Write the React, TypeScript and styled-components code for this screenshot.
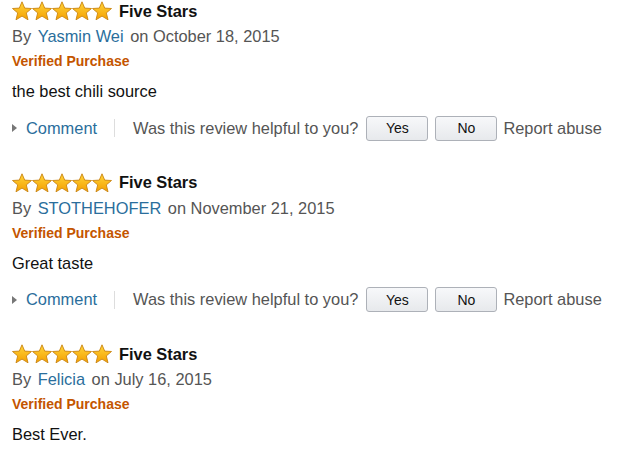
import styled, { createGlobalStyle } from "styled-components";

type Review = {
  author: string;
  date: string;
  body: string;
  actions: boolean;
};

const reviews: Review[] = [
  { author: "Yasmin Wei", date: "October 18, 2015", body: "the best chili source", actions: true },
  { author: "STOTHEHOFER", date: "November 21, 2015", body: "Great taste", actions: true },
  { author: "Felicia", date: "July 16, 2015", body: "Best Ever.", actions: false },
];

function Star() {
  return (
    <svg width="20" height="20" viewBox="0 0 20 20">
      <defs>
        <linearGradient id="starFill" x1="0" y1="0" x2="0" y2="1">
          <stop offset="0%" stopColor="#ffd43a" />
          <stop offset="100%" stopColor="#f4a000" />
        </linearGradient>
      </defs>
      <polygon
        points="10,0.8 12.7,7.1 19.5,7.5 14.3,11.9 16,18.8 10,15.1 4,18.8 5.7,11.9 0.5,7.5 7.3,7.1"
        fill="url(#starFill)"
        stroke="#c98512"
        strokeWidth="0.9"
        strokeLinejoin="round"
      />
    </svg>
  );
}

function App() {
  return (
    <>
      <GlobalStyle />
      <List>
        {reviews.map((r) => (
          <Item key={r.author}>
            <TitleRow>
              <Stars>
                {[0, 1, 2, 3, 4].map((i) => (
                  <Star key={i} />
                ))}
              </Stars>
              <Title>Five Stars</Title>
            </TitleRow>
            <Byline>
              By <Author>{r.author}</Author> on {r.date}
            </Byline>
            <Verified>Verified Purchase</Verified>
            <Body>{r.body}</Body>
            {r.actions && (
              <Actions>
                <CommentLink>
                  <Caret />
                  Comment
                </CommentLink>
                <Divider />
                <Helpful>Was this review helpful to you?</Helpful>
                <VoteButton>Yes</VoteButton>
                <VoteButton>No</VoteButton>
                <Report>Report abuse</Report>
              </Actions>
            )}
          </Item>
        ))}
      </List>
    </>
  );
}

const GlobalStyle = createGlobalStyle`
  body {
    margin: 0;
    background: #ffffff;
    font-family: "Liberation Sans", Arial, sans-serif;
    overflow: hidden;
  }
`;

const List = styled.div`
  padding: 0 0 0 12px;
  display: flex;
  flex-direction: column;
  gap: 30.5px;
`;

const Item = styled.div`
  display: flex;
  flex-direction: column;
`;

const TitleRow = styled.div`
  display: flex;
  align-items: center;
  height: 22px;
`;

const Stars = styled.div`
  display: flex;
  svg {
    display: block;
  }
`;

const Title = styled.span`
  margin-left: 7px;
  font-size: 16.4px;
  font-weight: bold;
  color: #111;
`;

const Byline = styled.div`
  margin-top: 4px;
  line-height: 20px;
  font-size: 16.4px;
  color: #555;
`;

const Author = styled.span`
  color: #2a6e9c;
  margin: 0 2px;
`;

const Verified = styled.div`
  margin-top: 6px;
  line-height: 18px;
  font-size: 14px;
  font-weight: bold;
  color: #c45500;
`;

const Body = styled.div`
  margin-top: 11px;
  line-height: 20px;
  font-size: 16.4px;
  color: #111;
`;

const Actions = styled.div`
  margin-top: 14px;
  height: 26px;
  display: flex;
  align-items: center;
  font-size: 16.4px;
`;

const CommentLink = styled.span`
  display: flex;
  align-items: center;
  color: #2a6e9c;
`;

const Caret = styled.span`
  width: 0;
  height: 0;
  margin: 0 9px 0 0;
  border-top: 4px solid transparent;
  border-bottom: 4px solid transparent;
  border-left: 5px solid #777;
`;

const Divider = styled.span`
  width: 1px;
  height: 18px;
  background: #ddd;
  margin: 0 18px 0 17px;
`;

const Helpful = styled.span`
  color: #555;
  margin-right: 8px;
`;

const VoteButton = styled.button`
  width: 62px;
  height: 25px;
  margin-right: 7px;
  padding: 0;
  font-family: "Liberation Sans", Arial, sans-serif;
  font-size: 14px;
  color: #111;
  background: linear-gradient(#f7f8fa, #e7e9ec);
  border: 1px solid #adb1b8;
  border-radius: 3px;
`;

const Report = styled.span`
  color: #555;
  margin-left: -1px;
`;

export default App;
